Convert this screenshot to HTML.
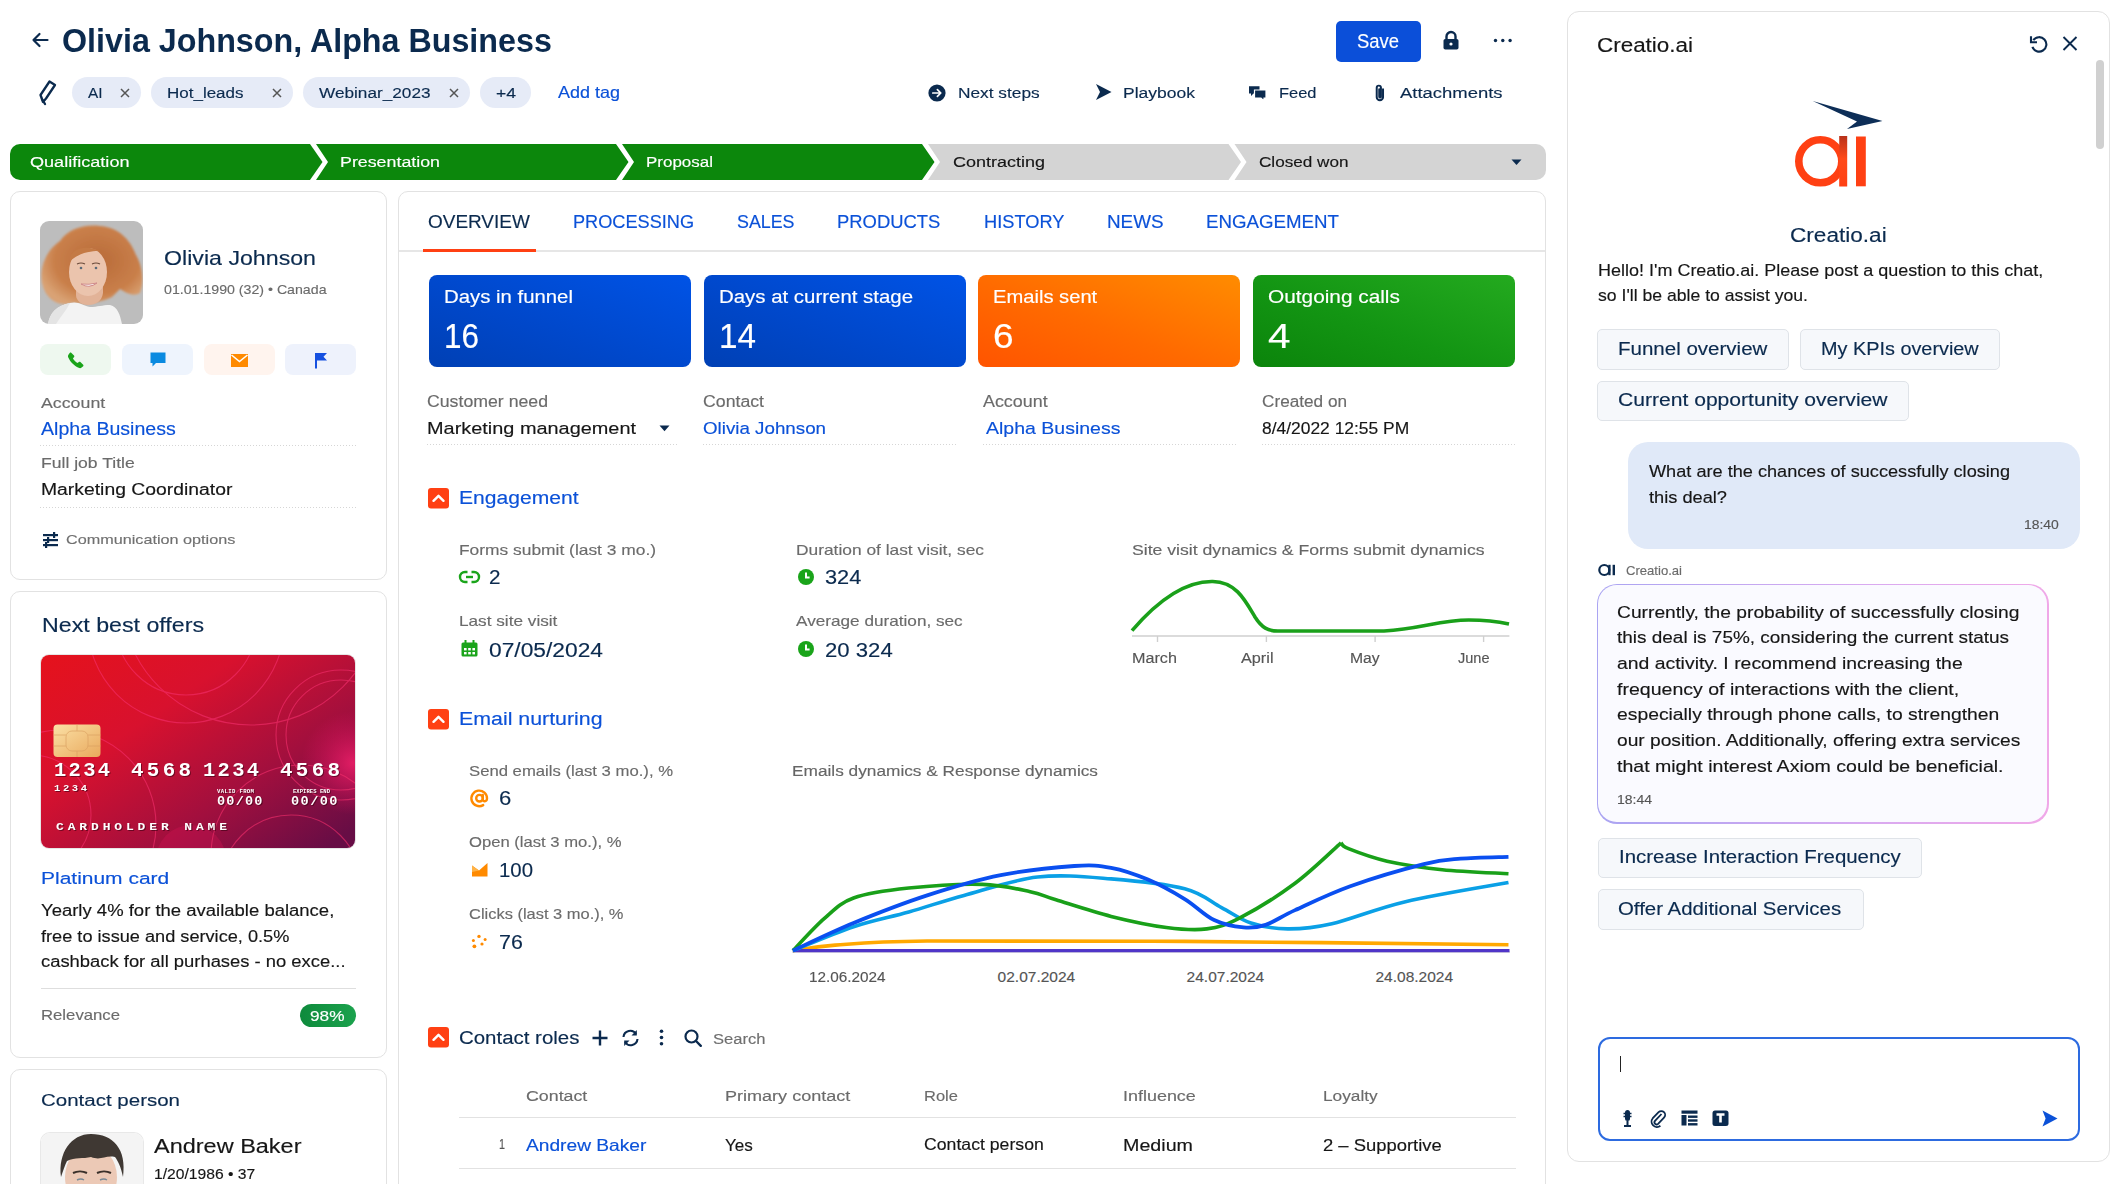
<!DOCTYPE html>
<html><head><meta charset="utf-8"><title>Creatio</title>
<style>
html,body{margin:0;padding:0;background:#fff;}
body{width:2120px;height:1184px;overflow:hidden;position:relative;font-family:"Liberation Sans",sans-serif;}
.t{position:absolute;white-space:nowrap;line-height:1;-webkit-text-stroke:0.15px currentColor;}
.s{position:absolute;overflow:visible;}
.b{position:absolute;}
</style></head><body>
<svg class="s" style="left:31px;top:32px;" width="18" height="16" viewBox="0 0 18 16"><path d="M16.5 8H2.5M8.5 2L2.5 8L8.5 14" fill="none" stroke="#0b2a4e" stroke-width="2.2" stroke-linecap="round" stroke-linejoin="round"/></svg><div class="t" style="left:61.50px;top:24.99px;font-size:32.50px;color:#0b2a4e;font-weight:700;letter-spacing:0.000px;transform:scaleX(0.9923);transform-origin:0 0;-webkit-text-stroke:0;">Olivia Johnson, Alpha Business</div><div class="b" style="left:1336px;top:20.5px;width:85px;height:41px;background:#0b4fd9;border-radius:5px;"></div><div class="t" style="left:1356.50px;top:31.27px;font-size:20.00px;color:#ffffff;font-weight:400;letter-spacing:0.000px;transform:scaleX(0.9213);transform-origin:0 0;">Save</div><svg class="s" style="left:1442px;top:31px;" width="18" height="19" viewBox="0 0 18 19"><path d="M4.5 8V5.5a4.5 4.5 0 0 1 9 0V8" fill="none" stroke="#0b2a4e" stroke-width="2.4"/><rect x="1.5" y="8" width="15" height="10.5" rx="1.8" fill="#0b2a4e"/><circle cx="9" cy="13" r="1.6" fill="#fff"/></svg><svg class="s" style="left:1493px;top:37px;" width="20" height="7" viewBox="0 0 20 7"><circle cx="2.5" cy="3.5" r="1.7" fill="#0b2a4e"/><circle cx="9.8" cy="3.5" r="1.7" fill="#0b2a4e"/><circle cx="17.1" cy="3.5" r="1.7" fill="#0b2a4e"/></svg><svg class="s" style="left:36px;top:78px;" width="22" height="28" viewBox="0 0 22 28"><path d="M7 24 L4.5 17 L13.5 3.5 L19 7 L10 20.5 Z M4.5 17 L6 21" fill="none" stroke="#0b2a4e" stroke-width="2.3" stroke-linejoin="round"/><path d="M6 21 L9 26" stroke="#0b2a4e" stroke-width="2.3" stroke-linecap="round"/></svg><div class="b" style="left:72px;top:77px;width:68.5px;height:30.5px;background:#e6ebf7;border-radius:16px;"></div><div class="t" style="left:87.80px;top:84.58px;font-size:15.50px;color:#0b2a4e;font-weight:400;letter-spacing:0.000px;transform:scaleX(0.9901);transform-origin:0 0;">AI</div><svg class="s" style="left:120px;top:87.5px;" width="10" height="10" viewBox="0 0 10 10"><path d="M1 1L9 9M9 1L1 9" stroke="#555" stroke-width="1.5"/></svg><div class="b" style="left:151px;top:77px;width:141.5px;height:30.5px;background:#e6ebf7;border-radius:16px;"></div><div class="t" style="left:166.80px;top:84.58px;font-size:15.50px;color:#0b2a4e;font-weight:400;letter-spacing:0.000px;transform:scaleX(1.0961);transform-origin:0 0;">Hot_leads</div><svg class="s" style="left:272px;top:87.5px;" width="10" height="10" viewBox="0 0 10 10"><path d="M1 1L9 9M9 1L1 9" stroke="#555" stroke-width="1.5"/></svg><div class="b" style="left:303px;top:77px;width:166.5px;height:30.5px;background:#e6ebf7;border-radius:16px;"></div><div class="t" style="left:318.80px;top:84.58px;font-size:15.50px;color:#0b2a4e;font-weight:400;letter-spacing:0.000px;transform:scaleX(1.1090);transform-origin:0 0;">Webinar_2023</div><svg class="s" style="left:449px;top:87.5px;" width="10" height="10" viewBox="0 0 10 10"><path d="M1 1L9 9M9 1L1 9" stroke="#555" stroke-width="1.5"/></svg><div class="b" style="left:480px;top:77px;width:51px;height:30.5px;background:#e6ebf7;border-radius:16px;"></div><div class="t" style="left:495.50px;top:84.58px;font-size:15.50px;color:#0b2a4e;font-weight:400;letter-spacing:0.000px;transform:scaleX(1.1317);transform-origin:0 0;">+4</div><div class="t" style="left:557.50px;top:84.03px;font-size:16.50px;color:#0b51d8;font-weight:400;letter-spacing:0.000px;transform:scaleX(1.0900);transform-origin:0 0;">Add tag</div><svg class="s" style="left:927.5px;top:83.5px;" width="18" height="18" viewBox="0 0 18 18"><circle cx="9" cy="9" r="8.6" fill="#0b2a4e"/><path d="M4.8 9H12.6M9.4 5.6L12.8 9L9.4 12.4" fill="none" stroke="#fff" stroke-width="1.7" stroke-linecap="round" stroke-linejoin="round"/></svg><div class="t" style="left:957.70px;top:84.76px;font-size:15.40px;color:#0b2a4e;font-weight:400;letter-spacing:0.000px;transform:scaleX(1.1237);transform-origin:0 0;">Next steps</div><svg class="s" style="left:1095px;top:83px;" width="17" height="18" viewBox="0 0 17 18"><path d="M1 1 L16.5 9 L1 17 L5 9 Z" fill="#0b2a4e"/></svg><div class="t" style="left:1123.00px;top:84.76px;font-size:15.40px;color:#0b2a4e;font-weight:400;letter-spacing:0.000px;transform:scaleX(1.1372);transform-origin:0 0;">Playbook</div><svg class="s" style="left:1248px;top:83.5px;" width="19" height="18" viewBox="0 0 19 18"><path d="M1 2.2h10.5v7.2H5.5L3 12V9.4H1Z" fill="#0b2a4e"/><path d="M6.5 6h11.5v8h-2v3l-3-3H6.5Z" fill="#0b2a4e" stroke="#fff" stroke-width="1.2"/></svg><div class="t" style="left:1278.80px;top:84.76px;font-size:15.40px;color:#0b2a4e;font-weight:400;letter-spacing:0.000px;transform:scaleX(1.0690);transform-origin:0 0;">Feed</div><svg class="s" style="left:1372px;top:83px;" width="15" height="19" viewBox="0 0 15 19"><path d="M10.5 6 V13.5 a3 3 0 0 1 -6 0 V4.5 a2 2 0 0 1 4 0 V13 a0.8 0.8 0 0 1 -1.6 0 V6" fill="none" stroke="#0b2a4e" stroke-width="1.9" stroke-linecap="round" transform="translate(0,0) scale(1.05)"/></svg><div class="t" style="left:1400.00px;top:84.76px;font-size:15.40px;color:#0b2a4e;font-weight:400;letter-spacing:0.000px;transform:scaleX(1.1982);transform-origin:0 0;">Attachments</div><svg class="s" style="left:10px;top:144px;" width="1536" height="36" viewBox="0 0 1536 36"><defs><clipPath id="stc"><rect x="0" y="0" width="1536" height="36" rx="10"/></clipPath></defs><g clip-path="url(#stc)"><polygon points="0.00,0.00 300.00,0.00 312.50,18.00 300.00,36.00 0.00,36.00" fill="#0c870c"/><polygon points="306.00,0.00 606.00,0.00 618.50,18.00 606.00,36.00 306.00,36.00 318.00,18.00" fill="#0c870c"/><polygon points="612.00,0.00 912.00,0.00 924.50,18.00 912.00,36.00 612.00,36.00 624.00,18.00" fill="#0c870c"/><polygon points="918.00,0.00 1218.50,0.00 1231.00,18.00 1218.50,36.00 918.00,36.00 930.00,18.00" fill="#d4d4d4"/><polygon points="1224.50,0.00 1536.00,0.00 1536.00,36.00 1224.50,36.00 1236.50,18.00" fill="#d4d4d4"/></g></svg><div class="t" style="left:30.00px;top:154.05px;font-size:15.30px;color:#ffffff;font-weight:400;letter-spacing:0.000px;transform:scaleX(1.1820);transform-origin:0 0;">Qualification</div><div class="t" style="left:340.00px;top:154.05px;font-size:15.30px;color:#ffffff;font-weight:400;letter-spacing:0.000px;transform:scaleX(1.1643);transform-origin:0 0;">Presentation</div><div class="t" style="left:646.00px;top:154.05px;font-size:15.30px;color:#ffffff;font-weight:400;letter-spacing:0.000px;transform:scaleX(1.1098);transform-origin:0 0;">Proposal</div><div class="t" style="left:953.00px;top:154.05px;font-size:15.30px;color:#161616;font-weight:400;letter-spacing:0.000px;transform:scaleX(1.1761);transform-origin:0 0;">Contracting</div><div class="t" style="left:1259.00px;top:154.05px;font-size:15.30px;color:#161616;font-weight:400;letter-spacing:0.000px;transform:scaleX(1.1198);transform-origin:0 0;">Closed won</div><svg class="s" style="left:1510.5px;top:159px;" width="11" height="7" viewBox="0 0 11 7"><path d="M0.5 0.5H10.5L5.5 6Z" fill="#0b2a4e"/></svg><div class="b" style="left:10px;top:190.5px;width:376.5px;height:389px;border:1.5px solid #e2e2e2;border-radius:10px;background:#fff;box-sizing:border-box;"></div><svg class="s" style="left:40px;top:221px;" width="103" height="103" viewBox="0 0 103 103"><defs><clipPath id="ph1"><rect width="103" height="103" rx="9"/></clipPath>
<radialGradient id="hair" cx="0.55" cy="0.45" r="0.6"><stop offset="0" stop-color="#b86a38"/><stop offset="0.7" stop-color="#c97f4a"/><stop offset="1" stop-color="#d9a274"/></radialGradient>
<filter id="blr" x="-10%" y="-10%" width="120%" height="120%"><feGaussianBlur stdDeviation="1.2"/></filter></defs>
<g clip-path="url(#ph1)"><rect width="103" height="103" fill="#bdbdbd"/>
<path d="M2 62 C-1 44 8 28 20 20 C28 8 44 3 60 5 C78 6 90 18 96 34 C103 46 104 62 100 72 C94 76 86 72 80 68 L72 76 C60 82 44 84 32 82 C20 86 6 80 2 62 Z" fill="url(#hair)" filter="url(#blr)"/>
<path d="M36 74 C36 80 42 84 48 84 C56 84 62 80 63 72 L63 64 L36 64 Z" fill="#e2b398"/>
<ellipse cx="48" cy="51" rx="19" ry="24" fill="#ebc4ad"/>
<path d="M30 36 C34 26 48 24 60 30 C54 30 42 30 30 40Z" fill="#c47a45"/>
<path d="M37 43 q4 -2 8 0 M52 43 q4 -2 8 0" stroke="#6a4a3a" stroke-width="1.1" fill="none"/>
<circle cx="41" cy="47" r="1.3" fill="#5a6a78"/><circle cx="56" cy="47" r="1.3" fill="#5a6a78"/>
<path d="M41 63 q8 5 16 -1 q-8 2 -16 1Z" fill="#fff" stroke="#d08a8a" stroke-width="1"/>
<path d="M8 103 C10 92 16 85 30 82 C38 80 42 84 50 86 C58 86 62 84 70 84 C78 86 80 94 82 103Z" fill="#f3f3f3"/>
<path d="M8 103 C10 92 16 85 30 82 C26 90 20 96 16 103Z" fill="#e4e4e4"/>
</g></svg><div class="t" style="left:164.00px;top:247.50px;font-size:20.20px;color:#0b2a4e;font-weight:400;letter-spacing:0.000px;transform:scaleX(1.1479);transform-origin:0 0;">Olivia Johnson</div><div class="t" style="left:164.00px;top:283.37px;font-size:13.50px;color:#6b6b6b;font-weight:400;letter-spacing:0.000px;transform:scaleX(1.0495);transform-origin:0 0;">01.01.1990 (32) • Canada</div><div class="b" style="left:40px;top:344px;width:71px;height:30.5px;background:#eef8ef;border-radius:8px;"></div><div class="b" style="left:122px;top:344px;width:71px;height:30.5px;background:#eef4fd;border-radius:8px;"></div><div class="b" style="left:204px;top:344px;width:70.5px;height:30.5px;background:#fff4ee;border-radius:8px;"></div><div class="b" style="left:285px;top:344px;width:71px;height:30.5px;background:#eef2fc;border-radius:8px;"></div><svg class="s" style="left:68px;top:351.5px;" width="16" height="16" viewBox="0 0 16 16"><path d="M3.2 0.8 L6 3.6 C6.5 4.1 6.4 4.8 6 5.2 L4.9 6.3 C5.8 8.2 7.8 10.2 9.7 11.1 L10.8 10 C11.2 9.6 11.9 9.5 12.4 10 L15.2 12.8 C15.6 13.2 15.6 13.8 15.2 14.2 L13.6 15.6 C12.8 16.3 11.6 16.3 10.6 15.8 C6.3 13.8 2.2 9.7 0.3 5.4 C-0.2 4.4 -0.1 3.2 0.6 2.4 L1.9 0.8 C2.3 0.4 2.8 0.4 3.2 0.8Z" fill="#1aa41a"/></svg><svg class="s" style="left:149.5px;top:352px;" width="16" height="16" viewBox="0 0 16 16"><path d="M0.5 0.5 H15.5 V11 H6 L2.5 14.5 V11 H0.5Z" fill="#0a8ae0"/></svg><svg class="s" style="left:230.5px;top:353.5px;" width="17" height="13" viewBox="0 0 17 13"><rect x="0" y="0" width="17" height="13" fill="#ff8a00"/><path d="M0.5 1 L8.5 7.5 L16.5 1" fill="none" stroke="#fff" stroke-width="1.6"/></svg><svg class="s" style="left:314.5px;top:351.5px;" width="13" height="17" viewBox="0 0 13 17"><path d="M1 1 V16.5" stroke="#1550e0" stroke-width="2"/><path d="M1 1 H12 L8.5 4.8 L12 8.6 H1Z" fill="#1550e0"/></svg><div class="t" style="left:40.70px;top:394.50px;font-size:15.00px;color:#6b6b6b;font-weight:400;letter-spacing:0.000px;transform:scaleX(1.1845);transform-origin:0 0;">Account</div><div class="t" style="left:41.20px;top:420.89px;font-size:17.50px;color:#0b51d8;font-weight:400;letter-spacing:0.000px;transform:scaleX(1.1167);transform-origin:0 0;">Alpha Business</div><div class="b" style="left:40px;top:445px;width:316px;height:1px;background-image:linear-gradient(to right,#d6d6d6 40%,transparent 40%);background-size:3px 1px;background-repeat:repeat-x;"></div><div class="t" style="left:41.20px;top:456.24px;font-size:14.60px;color:#6b6b6b;font-weight:400;letter-spacing:0.000px;transform:scaleX(1.2032);transform-origin:0 0;">Full job Title</div><div class="t" style="left:41.20px;top:482.29px;font-size:15.60px;color:#161616;font-weight:400;letter-spacing:0.000px;transform:scaleX(1.2406);transform-origin:0 0;">Marketing Coordinator</div><div class="b" style="left:40px;top:507px;width:316px;height:1px;background-image:linear-gradient(to right,#d6d6d6 40%,transparent 40%);background-size:3px 1px;background-repeat:repeat-x;"></div><svg class="s" style="left:42px;top:531.5px;" width="17" height="16" viewBox="0 0 17 16"><g fill="#0b2a4e"><rect x="1" y="2" width="15" height="2.2"/><rect x="11" y="0" width="2.2" height="6"/><rect x="1" y="7" width="15" height="2.2"/><rect x="5" y="5" width="2.2" height="6"/><rect x="1" y="12" width="15" height="2.2"/><rect x="3" y="10" width="2.2" height="6"/></g></svg><div class="t" style="left:66.40px;top:533.27px;font-size:13.50px;color:#707070;font-weight:400;letter-spacing:0.000px;transform:scaleX(1.2001);transform-origin:0 0;">Communication options</div><div class="b" style="left:10px;top:591px;width:376.5px;height:466.5px;border:1.5px solid #e2e2e2;border-radius:10px;background:#fff;box-sizing:border-box;"></div><div class="t" style="left:41.50px;top:614.67px;font-size:20.00px;color:#0b2a4e;font-weight:400;letter-spacing:0.000px;transform:scaleX(1.1597);transform-origin:0 0;">Next best offers</div><svg class="s" style="left:41px;top:655px;box-shadow:0 0 0 1px #e6e6e6;border-radius:8px;" width="314" height="193" viewBox="0 0 314 193"><defs><linearGradient id="cg" x1="0" y1="0" x2="1" y2="0.9"><stop offset="0" stop-color="#e5121c"/><stop offset="0.35" stop-color="#d8112e"/><stop offset="0.7" stop-color="#a10f3e"/><stop offset="1" stop-color="#670d45"/></linearGradient>
<clipPath id="cc"><rect x="0" y="0" width="314" height="193" rx="8"/></clipPath>
<linearGradient id="chipg" x1="0" y1="0" x2="1" y2="1"><stop offset="0" stop-color="#fbe1a6"/><stop offset="1" stop-color="#e9a85c"/></linearGradient>
<radialGradient id="pk" cx="0.5" cy="0.5" r="0.5"><stop offset="0" stop-color="#f0206a" stop-opacity="0.85"/><stop offset="1" stop-color="#e0105a" stop-opacity="0"/></radialGradient></defs>
<g clip-path="url(#cc)"><rect width="314" height="193" fill="url(#cg)"/>
<circle cx="312" cy="108" r="52" fill="url(#pk)"/>
<circle cx="150" cy="205" r="35" fill="#d41452" opacity="0.35"/>
<g fill="none" stroke="#f5306e" stroke-width="1.1" opacity="0.6">
<circle cx="145" cy="-30" r="70"/><circle cx="145" cy="-30" r="98"/><circle cx="210" cy="-60" r="130"/>
<circle cx="300" cy="80" r="55"/><circle cx="300" cy="80" r="65"/>
<circle cx="260" cy="200" r="90"/><circle cx="250" cy="230" r="70"/><circle cx="20" cy="170" r="95"/><circle cx="-10" cy="160" r="60"/>
</g>
<rect x="12.5" y="69.5" width="47" height="32.5" rx="4" fill="url(#chipg)"/>
<g fill="none" stroke="#d9a060" stroke-width="0.8" opacity="0.8"><path d="M12.5 80 H25 M12.5 91 H25 M47 80 H59.5 M47 91 H59.5 M36 69.5 V76 M36 96 V102"/><rect x="25" y="76" width="22" height="20" rx="6"/></g>
</g></svg><div class="t" style="left:54.00px;top:762.49px;font-size:19.50px;color:#fff;font-weight:700;letter-spacing:2.191px;transform:scaleX(1.0491);transform-origin:0 0;-webkit-text-stroke:0;text-shadow:1px 1px 0 rgba(60,0,20,0.6);font-family:'Liberation Mono',monospace;">1234</div><div class="t" style="left:131.00px;top:762.49px;font-size:19.50px;color:#fff;font-weight:700;letter-spacing:3.081px;transform:scaleX(1.0705);transform-origin:0 0;-webkit-text-stroke:0;text-shadow:1px 1px 0 rgba(60,0,20,0.6);font-family:'Liberation Mono',monospace;">4568</div><div class="t" style="left:203.00px;top:762.49px;font-size:19.50px;color:#fff;font-weight:700;letter-spacing:2.191px;transform:scaleX(1.0491);transform-origin:0 0;-webkit-text-stroke:0;text-shadow:1px 1px 0 rgba(60,0,20,0.6);font-family:'Liberation Mono',monospace;">1234</div><div class="t" style="left:280.00px;top:762.49px;font-size:19.50px;color:#fff;font-weight:700;letter-spacing:3.081px;transform:scaleX(1.0705);transform-origin:0 0;-webkit-text-stroke:0;text-shadow:1px 1px 0 rgba(60,0,20,0.6);font-family:'Liberation Mono',monospace;">4568</div><div class="t" style="left:54.00px;top:784.46px;font-size:9.50px;color:#fff;font-weight:700;letter-spacing:2.293px;transform:scaleX(1.1118);transform-origin:0 0;-webkit-text-stroke:0;text-shadow:1px 1px 0 rgba(60,0,20,0.6);font-family:'Liberation Mono',monospace;">1234</div><div class="t" style="left:217.00px;top:789.34px;font-size:5.50px;color:#fff;font-weight:700;letter-spacing:0.323px;transform:scaleX(1.0303);transform-origin:0 0;-webkit-text-stroke:0;text-shadow:1px 1px 0 rgba(60,0,20,0.6);font-family:'Liberation Mono',monospace;">VALID FROM</div><div class="t" style="left:293.00px;top:789.34px;font-size:5.50px;color:#fff;font-weight:700;letter-spacing:0.052px;transform:scaleX(1.0048);transform-origin:0 0;-webkit-text-stroke:0;text-shadow:1px 1px 0 rgba(60,0,20,0.6);font-family:'Liberation Mono',monospace;">EXPIRES END</div><div class="t" style="left:217.00px;top:794.50px;font-size:13.00px;color:#fff;font-weight:700;letter-spacing:1.169px;transform:scaleX(1.0416);transform-origin:0 0;-webkit-text-stroke:0;text-shadow:1px 1px 0 rgba(60,0,20,0.6);font-family:'Liberation Mono',monospace;">00/00</div><div class="t" style="left:291.00px;top:794.50px;font-size:13.00px;color:#fff;font-weight:700;letter-spacing:1.341px;transform:scaleX(1.0480);transform-origin:0 0;-webkit-text-stroke:0;text-shadow:1px 1px 0 rgba(60,0,20,0.6);font-family:'Liberation Mono',monospace;">00/00</div><div class="t" style="left:56.00px;top:822.19px;font-size:11.00px;color:#fff;font-weight:700;letter-spacing:3.263px;transform:scaleX(1.1817);transform-origin:0 0;-webkit-text-stroke:0;text-shadow:1px 1px 0 rgba(60,0,20,0.6);font-family:'Liberation Mono',monospace;">CARDHOLDER NAME</div><div class="t" style="left:41.30px;top:870.14px;font-size:17.20px;color:#0b51d8;font-weight:400;letter-spacing:0.000px;transform:scaleX(1.2200);transform-origin:0 0;">Platinum card</div><div class="t" style="left:41.00px;top:903.26px;font-size:16.00px;color:#161616;font-weight:400;letter-spacing:0.000px;transform:scaleX(1.1556);transform-origin:0 0;">Yearly 4% for the available balance,</div><div class="t" style="left:41.00px;top:928.66px;font-size:16.00px;color:#161616;font-weight:400;letter-spacing:-0.000px;transform:scaleX(1.1349);transform-origin:0 0;">free to issue and service, 0.5%</div><div class="t" style="left:41.00px;top:954.36px;font-size:16.00px;color:#161616;font-weight:400;letter-spacing:0.000px;transform:scaleX(1.1490);transform-origin:0 0;">cashback for all purhases - no exce...</div><div class="b" style="left:40.5px;top:987.5px;width:315.5px;height:1.5px;background:#dedede;"></div><div class="t" style="left:41.30px;top:1007.20px;font-size:15.00px;color:#6b6b6b;font-weight:400;letter-spacing:0.000px;transform:scaleX(1.1146);transform-origin:0 0;">Relevance</div><div class="b" style="left:300px;top:1004px;width:56px;height:23px;background:linear-gradient(90deg,#0e8a3c,#1ba24d);border-radius:12px;"></div><div class="t" style="left:310.00px;top:1007.88px;font-size:15.50px;color:#fff;font-weight:400;letter-spacing:0.000px;transform:scaleX(1.1121);transform-origin:0 0;">98%</div><div class="b" style="left:10px;top:1068.5px;width:376.5px;height:140px;border:1.5px solid #e2e2e2;border-radius:10px;background:#fff;box-sizing:border-box;"></div><div class="t" style="left:40.60px;top:1091.96px;font-size:17.30px;color:#0b2a4e;font-weight:400;letter-spacing:-0.000px;transform:scaleX(1.1860);transform-origin:0 0;">Contact person</div><svg class="s" style="left:41px;top:1133px;box-shadow:0 0 0 1px #e8e8e8;border-radius:9px;" width="102" height="70" viewBox="0 0 102 70"><defs><clipPath id="ph2"><rect width="102" height="70" rx="9"/></clipPath></defs>
<g clip-path="url(#ph2)"><rect width="102" height="70" fill="#f4f4f4"/>
<ellipse cx="50" cy="44" rx="26" ry="31" fill="#ecc9b6"/>
<path d="M20 44 C17 20 30 1 50 1 C72 1 86 16 82 44 C80 34 77 28 74 24 C64 22 60 28 50 24 C42 26 34 24 26 28 C24 32 22 38 20 44Z" fill="#3f3833"/>
<path d="M32 40 C36 38 42 38 46 40 M56 40 C60 38 66 38 70 40" stroke="#3a302a" stroke-width="2" fill="none"/>
<path d="M36 47 q4 -2 7 0 M59 47 q4 -2 7 0" stroke="#7a8a96" stroke-width="1.4" fill="none"/>
</g></svg><div class="t" style="left:153.80px;top:1136.17px;font-size:20.00px;color:#161616;font-weight:400;letter-spacing:0.000px;transform:scaleX(1.1742);transform-origin:0 0;">Andrew Baker</div><div class="t" style="left:153.80px;top:1165.68px;font-size:15.50px;color:#161616;font-weight:400;letter-spacing:-0.000px;transform:scaleX(1.0106);transform-origin:0 0;">1/20/1986 • 37</div><div class="b" style="left:398px;top:191px;width:1148px;height:1100px;border:1.5px solid #e2e2e2;border-radius:10px;background:#fff;box-sizing:border-box;"></div><div class="t" style="left:428.30px;top:214.49px;font-size:17.50px;color:#0b2a4e;font-weight:400;letter-spacing:-0.000px;transform:scaleX(1.0829);transform-origin:0 0;">OVERVIEW</div><div class="t" style="left:572.70px;top:214.49px;font-size:17.50px;color:#0b51d8;font-weight:400;letter-spacing:0.000px;transform:scaleX(1.0369);transform-origin:0 0;">PROCESSING</div><div class="t" style="left:736.80px;top:214.49px;font-size:17.50px;color:#0b51d8;font-weight:400;letter-spacing:0.000px;transform:scaleX(1.0191);transform-origin:0 0;">SALES</div><div class="t" style="left:836.90px;top:214.49px;font-size:17.50px;color:#0b51d8;font-weight:400;letter-spacing:0.000px;transform:scaleX(1.0520);transform-origin:0 0;">PRODUCTS</div><div class="t" style="left:983.50px;top:214.49px;font-size:17.50px;color:#0b51d8;font-weight:400;letter-spacing:0.000px;transform:scaleX(1.0421);transform-origin:0 0;">HISTORY</div><div class="t" style="left:1106.60px;top:214.49px;font-size:17.50px;color:#0b51d8;font-weight:400;letter-spacing:-0.000px;transform:scaleX(1.0781);transform-origin:0 0;">NEWS</div><div class="t" style="left:1205.70px;top:214.49px;font-size:17.50px;color:#0b51d8;font-weight:400;letter-spacing:0.000px;transform:scaleX(1.0686);transform-origin:0 0;">ENGAGEMENT</div><div class="b" style="left:399px;top:250px;width:1146px;height:1.5px;background:#e6e6e6;"></div><div class="b" style="left:423px;top:248.8px;width:113px;height:3px;background:#ff4013;"></div><div class="b" style="left:429.4px;top:275px;width:261.6px;height:92px;background:linear-gradient(20deg,#0040b4 0%,#0047c9 40%,#0053e6 100%);border-radius:8px;"></div><div class="t" style="left:444.40px;top:289.39px;font-size:17.50px;color:#fff;font-weight:400;letter-spacing:0.000px;transform:scaleX(1.1624);transform-origin:0 0;">Days in funnel</div><div class="t" style="left:444.40px;top:318.60px;font-size:34.50px;color:#fff;font-weight:400;letter-spacing:0.000px;transform:scaleX(0.9121);transform-origin:0 0;">16</div><div class="b" style="left:704px;top:275px;width:261.5px;height:92px;background:linear-gradient(20deg,#0040b4 0%,#0047c9 40%,#0053e6 100%);border-radius:8px;"></div><div class="t" style="left:719.00px;top:289.39px;font-size:17.50px;color:#fff;font-weight:400;letter-spacing:0.000px;transform:scaleX(1.1664);transform-origin:0 0;">Days at current stage</div><div class="t" style="left:719.00px;top:318.60px;font-size:34.50px;color:#fff;font-weight:400;letter-spacing:0.000px;transform:scaleX(0.9642);transform-origin:0 0;">14</div><div class="b" style="left:978.4px;top:275px;width:261.8px;height:92px;background:linear-gradient(20deg,#ff5400 0%,#ff6a00 45%,#ff8c00 100%);border-radius:8px;"></div><div class="t" style="left:993.40px;top:289.39px;font-size:17.50px;color:#fff;font-weight:400;letter-spacing:0.000px;transform:scaleX(1.1520);transform-origin:0 0;">Emails sent</div><div class="t" style="left:993.40px;top:318.60px;font-size:34.50px;color:#fff;font-weight:400;letter-spacing:0px;transform:scaleX(1.0736);transform-origin:0 0;">6</div><div class="b" style="left:1253px;top:275px;width:261.8px;height:92px;background:linear-gradient(20deg,#0b840b 0%,#139513 45%,#24aa1f 100%);border-radius:8px;"></div><div class="t" style="left:1268.00px;top:289.39px;font-size:17.50px;color:#fff;font-weight:400;letter-spacing:0.000px;transform:scaleX(1.1894);transform-origin:0 0;">Outgoing calls</div><div class="t" style="left:1268.00px;top:318.60px;font-size:34.50px;color:#fff;font-weight:400;letter-spacing:0px;transform:scaleX(1.1727);transform-origin:0 0;">4</div><div class="t" style="left:426.50px;top:393.66px;font-size:16.00px;color:#6b6b6b;font-weight:400;letter-spacing:0.000px;transform:scaleX(1.1061);transform-origin:0 0;">Customer need</div><div class="t" style="left:426.50px;top:420.19px;font-size:16.20px;color:#161616;font-weight:400;letter-spacing:0.000px;transform:scaleX(1.2290);transform-origin:0 0;">Marketing management</div><div class="b" style="left:427px;top:444px;width:250.8px;height:1px;background-image:linear-gradient(to right,#d6d6d6 40%,transparent 40%);background-size:3px 1px;background-repeat:repeat-x;"></div><div class="t" style="left:703.00px;top:393.66px;font-size:16.00px;color:#6b6b6b;font-weight:400;letter-spacing:0.000px;transform:scaleX(1.1063);transform-origin:0 0;">Contact</div><div class="t" style="left:703.00px;top:420.19px;font-size:16.20px;color:#0b51d8;font-weight:400;letter-spacing:0.000px;transform:scaleX(1.1585);transform-origin:0 0;">Olivia Johnson</div><div class="b" style="left:703px;top:444px;width:254px;height:1px;background-image:linear-gradient(to right,#d6d6d6 40%,transparent 40%);background-size:3px 1px;background-repeat:repeat-x;"></div><div class="t" style="left:982.60px;top:393.66px;font-size:16.00px;color:#6b6b6b;font-weight:400;letter-spacing:0.000px;transform:scaleX(1.1174);transform-origin:0 0;">Account</div><div class="t" style="left:985.50px;top:420.19px;font-size:16.20px;color:#0b51d8;font-weight:400;letter-spacing:0.000px;transform:scaleX(1.2045);transform-origin:0 0;">Alpha Business</div><div class="b" style="left:982.6px;top:444px;width:253.4px;height:1px;background-image:linear-gradient(to right,#d6d6d6 40%,transparent 40%);background-size:3px 1px;background-repeat:repeat-x;"></div><div class="t" style="left:1262.30px;top:393.66px;font-size:16.00px;color:#6b6b6b;font-weight:400;letter-spacing:0.000px;transform:scaleX(1.0737);transform-origin:0 0;">Created on</div><div class="t" style="left:1262.30px;top:420.19px;font-size:16.20px;color:#161616;font-weight:400;letter-spacing:0.000px;transform:scaleX(1.0761);transform-origin:0 0;">8/4/2022 12:55 PM</div><div class="b" style="left:1262.3px;top:444px;width:253.9px;height:1px;background-image:linear-gradient(to right,#d6d6d6 40%,transparent 40%);background-size:3px 1px;background-repeat:repeat-x;"></div><svg class="s" style="left:659px;top:424.5px;" width="11" height="7" viewBox="0 0 11 7"><path d="M0.5 0.5H10.5L5.5 6.2Z" fill="#0b2a4e"/></svg><svg class="s" style="left:428px;top:488.2px;" width="21" height="20.5" viewBox="0 0 21 20.5"><rect width="21" height="20.5" rx="3" fill="#ff4013"/><path d="M5.5 12.8 L10.5 7.8 L15.5 12.8" fill="none" stroke="#fff" stroke-width="2.4" stroke-linecap="round" stroke-linejoin="round"/></svg><div class="t" style="left:459.40px;top:489.80px;font-size:17.60px;color:#0b51d8;font-weight:400;letter-spacing:0.000px;transform:scaleX(1.1977);transform-origin:0 0;">Engagement</div><div class="t" style="left:459.40px;top:541.50px;font-size:15.00px;color:#6b6b6b;font-weight:400;letter-spacing:0.000px;transform:scaleX(1.1587);transform-origin:0 0;">Forms submit (last 3 mo.)</div><svg class="s" style="left:459.5px;top:569.5px;" width="19" height="14" viewBox="0 0 19 14"><g fill="none" stroke="#1aa41a" stroke-width="2.4"><path d="M7.5 2 H5 a5 5 0 0 0 0 10 H7.5"/><path d="M11.5 2 H14 a5 5 0 0 1 0 10 H11.5"/><path d="M6 7 H13"/></g></svg><div class="t" style="left:488.50px;top:566.97px;font-size:20.00px;color:#0b2a4e;font-weight:400;letter-spacing:0px;transform:scaleX(1.0339);transform-origin:0 0;">2</div><div class="t" style="left:459.40px;top:613.10px;font-size:15.00px;color:#6b6b6b;font-weight:400;letter-spacing:0.000px;transform:scaleX(1.1460);transform-origin:0 0;">Last site visit</div><svg class="s" style="left:461px;top:639.5px;" width="17" height="17" viewBox="0 0 17 17"><g fill="#1aa41a"><rect x="0.5" y="2.5" width="16" height="14" rx="1.5"/><rect x="3.5" y="0" width="2" height="4"/><rect x="11.5" y="0" width="2" height="4"/></g><g fill="#fff"><rect x="3" y="8" width="2.6" height="2.4"/><rect x="7.2" y="8" width="2.6" height="2.4"/><rect x="11.4" y="8" width="2.6" height="2.4"/><rect x="3" y="12" width="2.6" height="2.4"/><rect x="7.2" y="12" width="2.6" height="2.4"/><rect x="11.4" y="12" width="2.6" height="2.4"/></g></svg><div class="t" style="left:489.00px;top:639.57px;font-size:20.00px;color:#0b2a4e;font-weight:400;letter-spacing:0.000px;transform:scaleX(1.1389);transform-origin:0 0;">07/05/2024</div><div class="t" style="left:796.20px;top:541.50px;font-size:15.00px;color:#6b6b6b;font-weight:400;letter-spacing:0.000px;transform:scaleX(1.1565);transform-origin:0 0;">Duration of last visit, sec</div><svg class="s" style="left:797.5px;top:569px;" width="16" height="16" viewBox="0 0 16 16"><circle cx="8" cy="8" r="8" fill="#1aa41a"/><path d="M8 3.6 V8.4 H11.6" fill="none" stroke="#fff" stroke-width="2"/></svg><div class="t" style="left:824.90px;top:566.97px;font-size:20.00px;color:#0b2a4e;font-weight:400;letter-spacing:0.000px;transform:scaleX(1.0878);transform-origin:0 0;">324</div><div class="t" style="left:796.20px;top:613.10px;font-size:15.00px;color:#6b6b6b;font-weight:400;letter-spacing:0.000px;transform:scaleX(1.1445);transform-origin:0 0;">Average duration, sec</div><svg class="s" style="left:797.5px;top:640.5px;" width="16" height="16" viewBox="0 0 16 16"><circle cx="8" cy="8" r="8" fill="#1aa41a"/><path d="M8 3.6 V8.4 H11.6" fill="none" stroke="#fff" stroke-width="2"/></svg><div class="t" style="left:824.90px;top:639.57px;font-size:20.00px;color:#0b2a4e;font-weight:400;letter-spacing:0.000px;transform:scaleX(1.1067);transform-origin:0 0;">20 324</div><div class="t" style="left:1132.10px;top:541.58px;font-size:15.50px;color:#666;font-weight:400;letter-spacing:0.000px;transform:scaleX(1.1371);transform-origin:0 0;">Site visit dynamics &amp; Forms submit dynamics</div><svg class="s" style="left:1132px;top:636px;" width="378" height="8" viewBox="0 0 378 8"><path d="M0 0 H377.4" stroke="#cfcfcf" stroke-width="1.6"/><path d="M25.5 0 V6" stroke="#cfcfcf" stroke-width="1.4"/><path d="M134.4 0 V6" stroke="#cfcfcf" stroke-width="1.4"/><path d="M243.1 0 V6" stroke="#cfcfcf" stroke-width="1.4"/><path d="M351.6 0 V6" stroke="#cfcfcf" stroke-width="1.4"/></svg><svg class="s" style="left:1120px;top:560px;" width="400" height="80" viewBox="0 0 400 80"><path d="M12 70.6 C40 38 66 21 92.8 21.5 C116 22 125 40 135 57 C142 68 148 71 158 71 L264 71 C300 69 320 60 348.8 60 C370 60 380 62 389 64" fill="none" stroke="#1aa01a" stroke-width="3.6"/></svg><div class="t" style="left:1132.10px;top:650.08px;font-size:15.50px;color:#555;font-weight:400;letter-spacing:0.000px;transform:scaleX(1.0426);transform-origin:0 0;">March</div><div class="t" style="left:1241.00px;top:650.08px;font-size:15.50px;color:#555;font-weight:400;letter-spacing:-0.000px;transform:scaleX(1.0481);transform-origin:0 0;">April</div><div class="t" style="left:1350.00px;top:650.08px;font-size:15.50px;color:#555;font-weight:400;letter-spacing:0.000px;transform:scaleX(1.0143);transform-origin:0 0;">May</div><div class="t" style="left:1458.00px;top:650.08px;font-size:15.50px;color:#555;font-weight:400;letter-spacing:0.000px;transform:scaleX(0.9372);transform-origin:0 0;">June</div><svg class="s" style="left:428px;top:709px;" width="21" height="20.5" viewBox="0 0 21 20.5"><rect width="21" height="20.5" rx="3" fill="#ff4013"/><path d="M5.5 12.8 L10.5 7.8 L15.5 12.8" fill="none" stroke="#fff" stroke-width="2.4" stroke-linecap="round" stroke-linejoin="round"/></svg><div class="t" style="left:459.40px;top:710.80px;font-size:17.60px;color:#0b51d8;font-weight:400;letter-spacing:0.000px;transform:scaleX(1.2137);transform-origin:0 0;">Email nurturing</div><div class="t" style="left:469.30px;top:762.50px;font-size:15.00px;color:#6b6b6b;font-weight:400;letter-spacing:0.000px;transform:scaleX(1.1123);transform-origin:0 0;">Send emails (last 3 mo.), %</div><svg class="s" style="left:470px;top:788.5px;" width="19" height="18.5" viewBox="0 0 19 18.5"><circle cx="9.5" cy="9.2" r="3.3" fill="none" stroke="#ff8a00" stroke-width="2.4"/><path d="M12.8 6 V10.5 C12.8 13 16.8 13 17 9.8 A7.8 7.8 0 1 0 13.2 16.1" fill="none" stroke="#ff8a00" stroke-width="2.4" stroke-linecap="round"/></svg><div class="t" style="left:499.00px;top:787.97px;font-size:20.00px;color:#0b2a4e;font-weight:400;letter-spacing:0px;transform:scaleX(1.1058);transform-origin:0 0;">6</div><div class="t" style="left:469.30px;top:834.10px;font-size:15.00px;color:#6b6b6b;font-weight:400;letter-spacing:0.000px;transform:scaleX(1.1087);transform-origin:0 0;">Open (last 3 mo.), %</div><svg class="s" style="left:471.5px;top:862.5px;" width="16" height="13.5" viewBox="0 0 16 13.5"><path d="M0 2.5 L7 7.5 L15.5 0 V13.5 H0Z" fill="#ff8a00"/><path d="M0 2.5 L7 7.5 L0 9Z" fill="#ffb347"/></svg><div class="t" style="left:499.00px;top:859.57px;font-size:20.00px;color:#0b2a4e;font-weight:400;letter-spacing:0.000px;transform:scaleX(1.0189);transform-origin:0 0;">100</div><div class="t" style="left:469.30px;top:906.10px;font-size:15.00px;color:#6b6b6b;font-weight:400;letter-spacing:0.000px;transform:scaleX(1.0969);transform-origin:0 0;">Clicks (last 3 mo.), %</div><svg class="s" style="left:471px;top:933.5px;" width="17" height="15" viewBox="0 0 17 15"><circle cx="8" cy="2.4" r="1.7" fill="#ff8a00"/><circle cx="14.1" cy="5.4" r="1.5" fill="#ff8a00"/><circle cx="2.4" cy="6.5" r="1.5" fill="#ff8a00"/><circle cx="11" cy="10" r="1.6" fill="#ff8a00"/><circle cx="3.4" cy="12.3" r="1.9" fill="#ff8a00"/></svg><div class="t" style="left:499.00px;top:932.27px;font-size:20.00px;color:#0b2a4e;font-weight:400;letter-spacing:-0.000px;transform:scaleX(1.0699);transform-origin:0 0;">76</div><div class="t" style="left:792.20px;top:763.38px;font-size:15.50px;color:#666;font-weight:400;letter-spacing:0.000px;transform:scaleX(1.1135);transform-origin:0 0;">Emails dynamics &amp; Response dynamics</div><svg class="s" style="left:780px;top:820px;" width="740" height="140" viewBox="0 0 740 140"><path d="M12 132 H730" stroke="#d8d8d8" stroke-width="1.5"/><path d="M12.88 130.61 C19.93 129.69 32.81 126.69 55.19 125.09 C77.57 123.50 88.91 121.66 147.17 121.04 C205.42 120.43 307.82 120.80 404.71 121.41 C501.59 122.03 674.52 124.17 728.48 124.72" fill="none" stroke="#ffa800" stroke-width="3.6"/><path d="M12.9 130.6 H729.5" fill="none" stroke="#5035c8" stroke-width="3.4"/><path d="M12.88 130.61 C22.99 126.62 54.27 113.13 73.58 106.70 C92.90 100.26 110.38 97.19 128.77 91.98 C147.17 86.77 162.50 81.25 183.96 75.42 C205.42 69.60 233.01 59.79 257.54 57.03 C282.07 54.27 306.60 56.90 331.13 58.87 C355.65 60.83 386.31 64.02 404.71 68.80 C423.11 73.58 430.46 81.86 441.50 87.56 C452.54 93.27 459.90 99.46 470.93 103.02 C481.97 106.57 494.24 108.78 507.73 108.90 C521.22 109.03 532.25 108.29 551.88 103.75 C571.50 99.22 596.03 88.55 625.46 81.68 C654.89 74.81 711.31 65.73 728.48 62.55" fill="none" stroke="#0aa0e6" stroke-width="3.6"/><path d="M12.88 130.61 C18.09 125.28 34.03 107.37 44.15 98.60 C54.27 89.83 59.48 83.09 73.58 78.00 C87.69 72.91 107.31 70.33 128.77 68.06 C150.23 65.80 182.12 63.77 202.35 64.39 C222.59 65.00 237.92 69.17 250.18 71.74 C262.45 74.32 262.45 75.73 275.94 79.84 C289.43 83.95 312.73 91.80 331.13 96.39 C349.52 100.99 370.37 105.35 386.31 107.43 C402.26 109.52 414.52 110.50 426.78 108.90 C439.05 107.31 445.18 105.47 459.90 97.87 C474.61 90.26 498.22 75.79 515.08 63.28 C531.95 50.77 553.41 29.56 561.07 22.81 M561.07 22.81 C562.30 23.79 560.77 25.63 568.43 28.70 C576.10 31.76 591.43 37.71 607.06 41.21 C622.70 44.70 642.02 47.58 662.25 49.67 C682.49 51.75 717.44 53.04 728.48 53.72" fill="none" stroke="#19a019" stroke-width="3.6" stroke-linejoin="round"/><path d="M12.88 130.61 C22.99 126.01 51.20 112.21 73.58 103.02 C95.97 93.82 122.64 83.39 147.17 75.42 C171.69 67.45 196.22 60.09 220.75 55.19 C245.28 50.28 275.94 47.22 294.33 45.99 C312.73 44.76 318.86 45.56 331.13 47.83 C343.39 50.10 355.65 54.39 367.92 59.60 C380.18 64.81 393.67 72.36 404.71 79.10 C415.75 85.85 424.33 95.35 434.14 100.07 C443.95 104.80 454.99 106.63 463.58 107.43 C472.16 108.23 477.07 107.74 485.65 104.86 C494.24 101.97 500.98 96.58 515.08 90.14 C529.19 83.70 548.81 73.89 570.27 66.23 C591.73 58.56 625.46 48.75 643.86 44.15 C662.25 39.55 666.54 39.86 680.65 38.63 C694.75 37.40 720.51 37.10 728.48 36.79" fill="none" stroke="#0a4ff0" stroke-width="3.8"/></svg><div class="t" style="left:809.40px;top:968.88px;font-size:15.50px;color:#555;font-weight:400;letter-spacing:0.000px;transform:scaleX(0.9874);transform-origin:0 0;">12.06.2024</div><div class="t" style="left:997.60px;top:968.88px;font-size:15.50px;color:#555;font-weight:400;letter-spacing:0.000px;">02.07.2024</div><div class="t" style="left:1186.60px;top:968.88px;font-size:15.50px;color:#555;font-weight:400;letter-spacing:0.000px;">24.07.2024</div><div class="t" style="left:1375.50px;top:968.88px;font-size:15.50px;color:#555;font-weight:400;letter-spacing:0.000px;">24.08.2024</div><svg class="s" style="left:428px;top:1027.3px;" width="21" height="20.5" viewBox="0 0 21 20.5"><rect width="21" height="20.5" rx="3" fill="#ff4013"/><path d="M5.5 12.8 L10.5 7.8 L15.5 12.8" fill="none" stroke="#fff" stroke-width="2.4" stroke-linecap="round" stroke-linejoin="round"/></svg><div class="t" style="left:459.10px;top:1030.00px;font-size:17.60px;color:#0b2a4e;font-weight:400;letter-spacing:0.000px;transform:scaleX(1.1615);transform-origin:0 0;">Contact roles</div><svg class="s" style="left:591px;top:1029px;" width="18" height="18" viewBox="0 0 18 18"><path d="M9 1.5 V16.5 M1.5 9 H16.5" stroke="#0b2a4e" stroke-width="2.4"/></svg><svg class="s" style="left:621px;top:1029px;" width="19" height="18" viewBox="0 0 19 18"><g fill="none" stroke="#0b2a4e" stroke-width="2.1"><path d="M2.5 8 A6.8 6.8 0 0 1 15 5"/><path d="M16.5 10 A6.8 6.8 0 0 1 4 13"/></g><path d="M15.8 1 V6.5 H10.5Z" fill="#0b2a4e"/><path d="M3.2 17 V11.5 H8.5Z" fill="#0b2a4e"/></svg><svg class="s" style="left:659px;top:1028.5px;" width="5" height="17" viewBox="0 0 5 17"><circle cx="2.5" cy="2.2" r="1.8" fill="#0b2a4e"/><circle cx="2.5" cy="8.5" r="1.8" fill="#0b2a4e"/><circle cx="2.5" cy="14.8" r="1.8" fill="#0b2a4e"/></svg><svg class="s" style="left:684px;top:1028.5px;" width="18" height="18" viewBox="0 0 18 18"><circle cx="7.5" cy="7.5" r="6" fill="none" stroke="#0b2a4e" stroke-width="2.2"/><path d="M12 12 L16.8 16.8" stroke="#0b2a4e" stroke-width="2.4" stroke-linecap="round"/></svg><div class="t" style="left:713.00px;top:1030.68px;font-size:15.50px;color:#6f6f6f;font-weight:400;letter-spacing:0.000px;transform:scaleX(1.0690);transform-origin:0 0;">Search</div><div class="t" style="left:525.80px;top:1088.02px;font-size:15.10px;color:#6b6b6b;font-weight:400;letter-spacing:-0.000px;transform:scaleX(1.1785);transform-origin:0 0;">Contact</div><div class="t" style="left:725.00px;top:1088.02px;font-size:15.10px;color:#6b6b6b;font-weight:400;letter-spacing:0.000px;transform:scaleX(1.1951);transform-origin:0 0;">Primary contact</div><div class="t" style="left:924.20px;top:1088.02px;font-size:15.10px;color:#6b6b6b;font-weight:400;letter-spacing:0.000px;transform:scaleX(1.0921);transform-origin:0 0;">Role</div><div class="t" style="left:1123.40px;top:1088.02px;font-size:15.10px;color:#6b6b6b;font-weight:400;letter-spacing:0.000px;transform:scaleX(1.1884);transform-origin:0 0;">Influence</div><div class="t" style="left:1322.50px;top:1088.02px;font-size:15.10px;color:#6b6b6b;font-weight:400;letter-spacing:0.000px;transform:scaleX(1.1438);transform-origin:0 0;">Loyalty</div><div class="b" style="left:459px;top:1116.8px;width:1057px;height:1.5px;background:#e2e2e2;"></div><div class="t" style="left:499.00px;top:1135.80px;font-size:15.00px;color:#555;font-weight:400;letter-spacing:0px;transform:scaleX(0.7192);transform-origin:0 0;">1</div><div class="t" style="left:525.80px;top:1136.63px;font-size:16.50px;color:#0b51d8;font-weight:400;letter-spacing:0.000px;transform:scaleX(1.1618);transform-origin:0 0;">Andrew Baker</div><div class="t" style="left:725.00px;top:1136.63px;font-size:16.50px;color:#161616;font-weight:400;letter-spacing:0.000px;transform:scaleX(1.0365);transform-origin:0 0;">Yes</div><div class="t" style="left:924.20px;top:1136.33px;font-size:16.50px;color:#161616;font-weight:400;letter-spacing:-0.000px;transform:scaleX(1.0706);transform-origin:0 0;">Contact person</div><div class="t" style="left:1123.40px;top:1136.63px;font-size:16.50px;color:#161616;font-weight:400;letter-spacing:-0.000px;transform:scaleX(1.1928);transform-origin:0 0;">Medium</div><div class="t" style="left:1322.50px;top:1136.63px;font-size:16.50px;color:#161616;font-weight:400;letter-spacing:0.000px;transform:scaleX(1.1156);transform-origin:0 0;">2 – Supportive</div><div class="b" style="left:459px;top:1167.8px;width:1057px;height:1.5px;background:#e2e2e2;"></div><div class="b" style="left:1566.5px;top:11px;width:543.5px;height:1151px;border:1.5px solid #e2e2e2;border-radius:12px;background:#fff;box-sizing:border-box;"></div><div class="t" style="left:1597.00px;top:35.07px;font-size:20.00px;color:#161616;font-weight:400;letter-spacing:0.000px;transform:scaleX(1.1216);transform-origin:0 0;">Creatio.ai</div><svg class="s" style="left:2029px;top:34px;" width="21" height="19" viewBox="0 0 21 19"><path d="M4.3 6.2 A7.2 7.2 0 1 1 3.4 12.8" fill="none" stroke="#0b2a4e" stroke-width="2.1"/><path d="M2 2.2 V8.2 H8" fill="none" stroke="#0b2a4e" stroke-width="2.1"/></svg><svg class="s" style="left:2061.5px;top:36px;" width="16" height="15" viewBox="0 0 16 15"><path d="M1.5 1 L14.5 14 M14.5 1 L1.5 14" stroke="#0b2a4e" stroke-width="1.9"/></svg><div class="b" style="left:2096.4px;top:60.2px;width:7.5px;height:88.7px;background:#d0d0d0;border-radius:4px;"></div><svg class="s" style="left:1780px;top:90px;" width="120" height="110" viewBox="1780 90 120 110"><defs><linearGradient id="stem" x1="0" y1="0" x2="0" y2="1"><stop offset="0" stop-color="#b8321a"/><stop offset="0.45" stop-color="#ff4a1a"/><stop offset="1" stop-color="#ff4013"/></linearGradient></defs>
<path d="M1812.7 101 L1882.5 121 L1847 129 L1857 121.6 Z" fill="#0d2e57"/>
<circle cx="1820.3" cy="161.3" r="21.5" fill="none" stroke="#ff4013" stroke-width="7.6"/>
<rect x="1839.2" y="136" width="8" height="50.5" fill="url(#stem)"/>
<rect x="1856" y="136.5" width="9.8" height="49.8" fill="#ff4013"/></svg><div class="t" style="left:1789.70px;top:224.67px;font-size:20.00px;color:#0b2a4e;font-weight:400;letter-spacing:0.000px;transform:scaleX(1.1297);transform-origin:0 0;">Creatio.ai</div><div class="t" style="left:1597.70px;top:261.51px;font-size:17.00px;color:#161616;font-weight:400;letter-spacing:0.000px;transform:scaleX(1.0580);transform-origin:0 0;">Hello! I&#x27;m Creatio.ai. Please post a question to this chat,</div><div class="t" style="left:1597.70px;top:287.31px;font-size:17.00px;color:#161616;font-weight:400;letter-spacing:0.000px;transform:scaleX(1.0364);transform-origin:0 0;">so I&#x27;ll be able to assist you.</div><div class="b" style="left:1597px;top:329px;width:192px;height:40.5px;background:#f6f8fb;border:1.5px solid #dfe3e8;border-radius:5px;box-sizing:border-box;"></div><div class="t" style="left:1617.60px;top:340.99px;font-size:17.50px;color:#0b2a4e;font-weight:400;letter-spacing:-0.000px;transform:scaleX(1.1725);transform-origin:0 0;">Funnel overview</div><div class="b" style="left:1800px;top:329px;width:200px;height:40.5px;background:#f6f8fb;border:1.5px solid #dfe3e8;border-radius:5px;box-sizing:border-box;"></div><div class="t" style="left:1821.30px;top:340.99px;font-size:17.50px;color:#0b2a4e;font-weight:400;letter-spacing:0.000px;transform:scaleX(1.1340);transform-origin:0 0;">My KPIs overview</div><div class="b" style="left:1597px;top:380.5px;width:311.5px;height:40.5px;background:#f6f8fb;border:1.5px solid #dfe3e8;border-radius:5px;box-sizing:border-box;"></div><div class="t" style="left:1617.60px;top:392.49px;font-size:17.50px;color:#0b2a4e;font-weight:400;letter-spacing:-0.000px;transform:scaleX(1.2047);transform-origin:0 0;">Current opportunity overview</div><div class="b" style="left:1628px;top:442.4px;width:451.5px;height:106.4px;background:#e0e9f8;border-radius:20px;"></div><div class="t" style="left:1649.40px;top:462.81px;font-size:17.00px;color:#161616;font-weight:400;letter-spacing:0.000px;transform:scaleX(1.0672);transform-origin:0 0;">What are the chances of successfully closing</div><div class="t" style="left:1649.40px;top:488.61px;font-size:17.00px;color:#161616;font-weight:400;letter-spacing:0.000px;transform:scaleX(1.0718);transform-origin:0 0;">this deal?</div><div class="t" style="left:2023.80px;top:517.87px;font-size:13.50px;color:#555;font-weight:400;letter-spacing:0.000px;transform:scaleX(1.0301);transform-origin:0 0;">18:40</div><svg class="s" style="left:1598px;top:563px;" width="19" height="14" viewBox="0 0 19 14"><circle cx="6.3" cy="7" r="5" fill="none" stroke="#0b2a4e" stroke-width="2.2"/><rect x="10.3" y="1.8" width="2.3" height="10.4" fill="#0b2a4e"/><rect x="14.6" y="1.8" width="2.4" height="10.4" fill="#0b2a4e"/></svg><div class="t" style="left:1625.60px;top:564.40px;font-size:13.00px;color:#6b6b6b;font-weight:400;letter-spacing:0.000px;transform:scaleX(1.0065);transform-origin:0 0;">Creatio.ai</div><div class="b" style="left:1597.2px;top:583.5px;width:451.4px;height:240.1px;border-radius:20px;padding:1.2px;box-sizing:border-box;background:linear-gradient(90deg,#aaa4f2,#d9aaf0 60%,#f0a8e8);"><div style="width:100%;height:100%;border-radius:18.8px;background:#fafaff;"></div></div><div class="t" style="left:1617.40px;top:603.61px;font-size:17.00px;color:#161616;font-weight:400;letter-spacing:0.000px;transform:scaleX(1.1309);transform-origin:0 0;">Currently, the probability of successfully closing</div><div class="t" style="left:1617.40px;top:629.31px;font-size:17.00px;color:#161616;font-weight:400;letter-spacing:0.000px;transform:scaleX(1.1152);transform-origin:0 0;">this deal is 75%, considering the current status</div><div class="t" style="left:1617.40px;top:655.01px;font-size:17.00px;color:#161616;font-weight:400;letter-spacing:0.000px;transform:scaleX(1.1409);transform-origin:0 0;">and activity. I recommend increasing the</div><div class="t" style="left:1617.40px;top:680.71px;font-size:17.00px;color:#161616;font-weight:400;letter-spacing:0.000px;transform:scaleX(1.1496);transform-origin:0 0;">frequency of interactions with the client,</div><div class="t" style="left:1617.40px;top:706.41px;font-size:17.00px;color:#161616;font-weight:400;letter-spacing:0.000px;transform:scaleX(1.1363);transform-origin:0 0;">especially through phone calls, to strengthen</div><div class="t" style="left:1617.40px;top:732.11px;font-size:17.00px;color:#161616;font-weight:400;letter-spacing:0.000px;transform:scaleX(1.1279);transform-origin:0 0;">our position. Additionally, offering extra services</div><div class="t" style="left:1617.40px;top:757.81px;font-size:17.00px;color:#161616;font-weight:400;letter-spacing:0.000px;transform:scaleX(1.1490);transform-origin:0 0;">that might interest Axiom could be beneficial.</div><div class="t" style="left:1617.00px;top:792.57px;font-size:13.50px;color:#555;font-weight:400;letter-spacing:0.000px;transform:scaleX(1.0360);transform-origin:0 0;">18:44</div><div class="b" style="left:1597.5px;top:837.5px;width:324px;height:40.5px;background:#f6f8fb;border:1.5px solid #dfe3e8;border-radius:5px;box-sizing:border-box;"></div><div class="t" style="left:1618.70px;top:849.49px;font-size:17.50px;color:#0b2a4e;font-weight:400;letter-spacing:0.000px;transform:scaleX(1.1681);transform-origin:0 0;">Increase Interaction Frequency</div><div class="b" style="left:1597.5px;top:889px;width:266px;height:40.5px;background:#f6f8fb;border:1.5px solid #dfe3e8;border-radius:5px;box-sizing:border-box;"></div><div class="t" style="left:1617.80px;top:900.99px;font-size:17.50px;color:#0b2a4e;font-weight:400;letter-spacing:0.000px;transform:scaleX(1.1661);transform-origin:0 0;">Offer Additional Services</div><div class="b" style="left:1597.5px;top:1036.7px;width:482px;height:104.4px;border:2px solid #2d6be0;border-radius:12px;box-sizing:border-box;background:#fff;"></div><div class="b" style="left:1619.5px;top:1056px;width:1.6px;height:15.5px;background:#222;"></div><svg class="s" style="left:1622px;top:1110px;" width="11" height="17" viewBox="0 0 11 17"><rect x="3" y="0" width="5" height="11" rx="2.5" fill="#0b2a4e"/><path d="M1.5 3.5 H3 M8 3.5 H9.5 M1.5 6.5 H3 M8 6.5 H9.5" stroke="#0b2a4e" stroke-width="1.3"/><path d="M5.5 11 V15.5 M2 16 H9" stroke="#0b2a4e" stroke-width="2"/></svg><svg class="s" style="left:1650px;top:1110px;" width="16" height="17" viewBox="0 0 16 17"><path d="M11.5 5 L5 11.8 a2.2 2.2 0 0 0 3.1 3.1 L14 8.6 a3.8 3.8 0 0 0 -5.4 -5.4 L2.8 9.2 a5.4 5.4 0 0 0 7.6 7.6" fill="none" stroke="#0b2a4e" stroke-width="1.8" transform="translate(0,-1)"/></svg><svg class="s" style="left:1681px;top:1110px;" width="17" height="16" viewBox="0 0 17 16"><g fill="#0b2a4e"><rect x="0.5" y="0.5" width="16" height="3.2"/><rect x="0.5" y="5" width="5" height="10.5"/><rect x="7" y="5.5" width="9.5" height="2.4"/><rect x="7" y="9.3" width="9.5" height="2.4"/><rect x="7" y="13.1" width="9.5" height="2.4"/></g></svg><svg class="s" style="left:1712px;top:1110px;" width="17" height="16.5" viewBox="0 0 17 16.5"><rect x="0.5" y="0.5" width="16" height="15.5" rx="2.5" fill="#0b2a4e"/><path d="M4.5 4.5 H12.5 M8.5 4.5 V12.5" stroke="#fff" stroke-width="2.6"/></svg><svg class="s" style="left:2041.5px;top:1109.5px;" width="16" height="17" viewBox="0 0 16 17"><path d="M0.5 0.5 L15.5 8.5 L0.5 16.5 L3.6 8.5 Z" fill="#0b51d8"/></svg>
</body></html>
